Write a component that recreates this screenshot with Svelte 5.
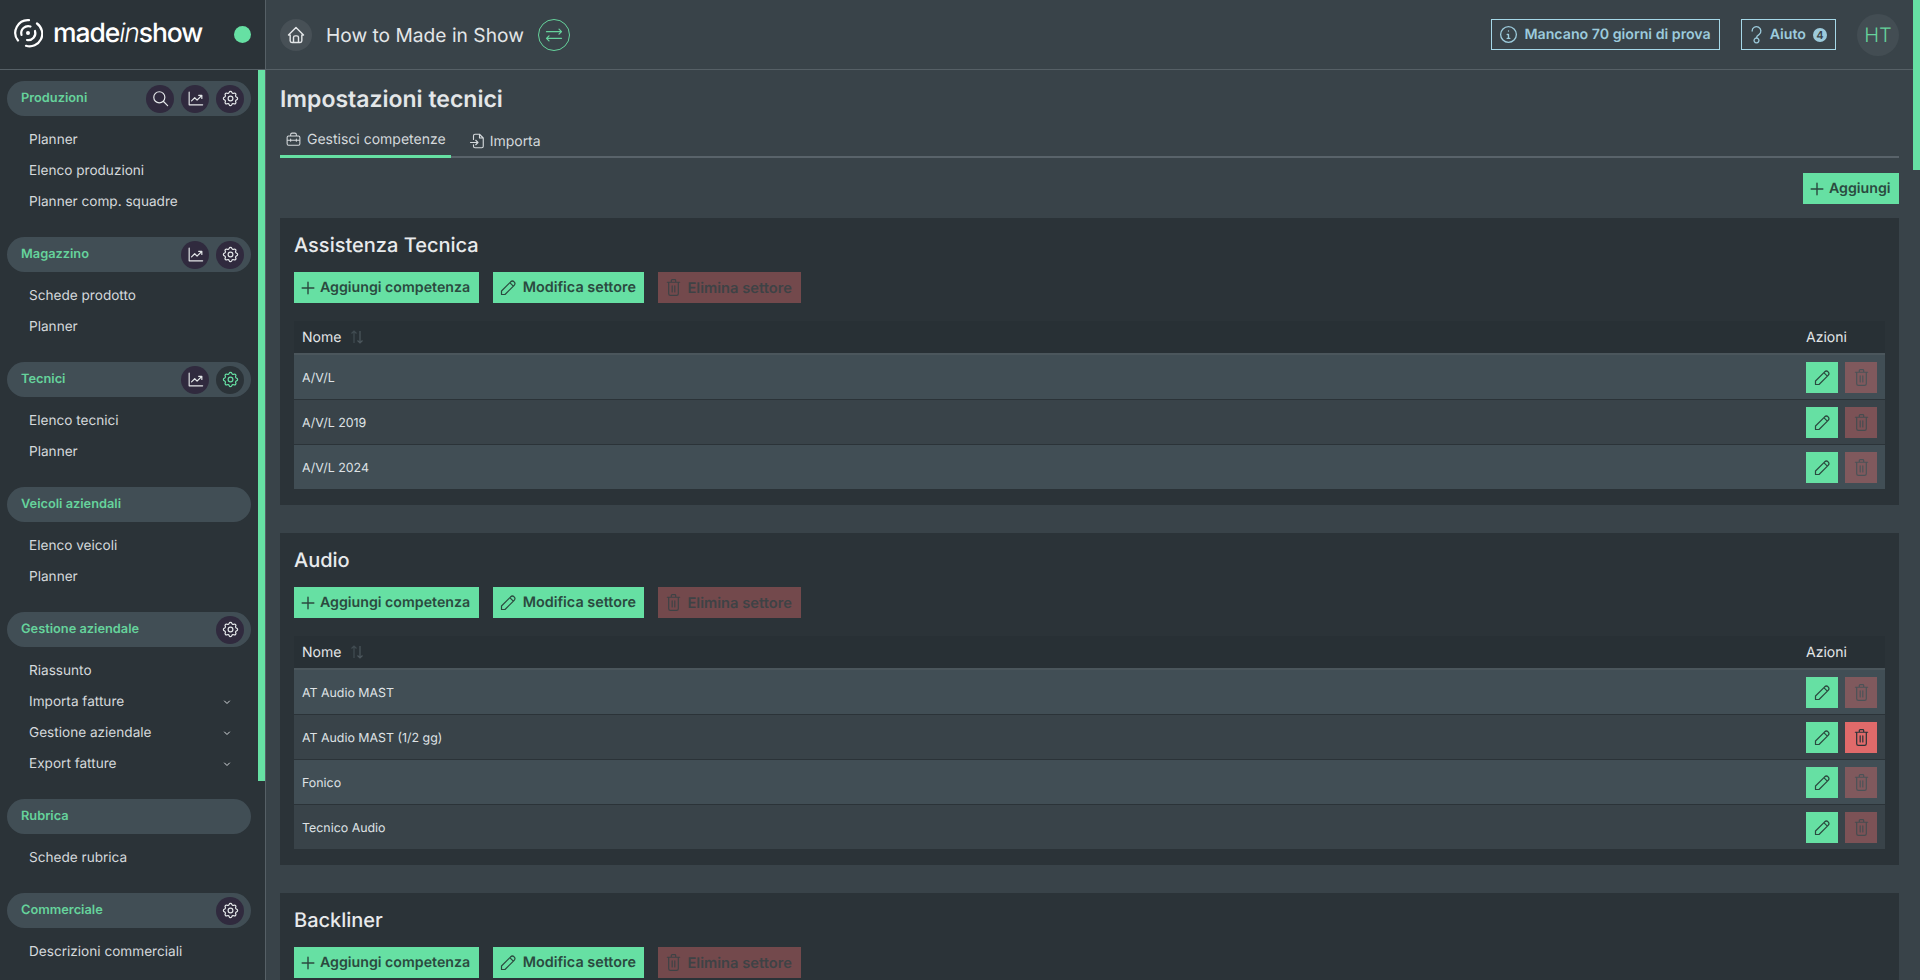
<script>
  const nav = [
    { title: 'Produzioni', icons: ['search', 'chart', 'gear'], items: ['Planner', 'Elenco produzioni', 'Planner comp. squadre'] },
    { title: 'Magazzino', icons: ['chart', 'gear'], items: ['Schede prodotto', 'Planner'] },
    { title: 'Tecnici', icons: ['chart', 'gear-on'], items: ['Elenco tecnici', 'Planner'] },
    { title: 'Veicoli aziendali', icons: [], items: ['Elenco veicoli', 'Planner'] },
    { title: 'Gestione aziendale', icons: ['gear'], items: ['Riassunto', 'Importa fatture>', 'Gestione aziendale>', 'Export fatture>'] },
    { title: 'Rubrica', icons: [], items: ['Schede rubrica'] },
    { title: 'Commerciale', icons: ['gear'], items: ['Descrizioni commerciali'] },
  ];

  const sectors = [
    { name: 'Assistenza Tecnica', rows: ['A/V/L', 'A/V/L 2019', 'A/V/L 2024'] },
    { name: 'Audio', rows: ['AT Audio MAST', 'AT Audio MAST (1/2 gg)', 'Fonico', 'Tecnico Audio'] },
    { name: 'Backliner', rows: [] },
  ];

  const paths = {
    search: 'M10.5 10.5m-7 0a7 7 0 1 0 14 0a7 7 0 1 0 -14 0 M21 21l-5.5 -5.5',
    chart: 'M4 4v16h17 M7 15l4 -4l3 3l5.5 -5.5 M16 8h4v4',
    gear: 'M10.325 4.317c.426 -1.756 2.924 -1.756 3.35 0a1.724 1.724 0 0 0 2.573 1.066c1.543 -.94 3.31 .826 2.37 2.37a1.724 1.724 0 0 0 1.065 2.572c1.756 .426 1.756 2.924 0 3.35a1.724 1.724 0 0 0 -1.066 2.573c.94 1.543 -.826 3.31 -2.37 2.37a1.724 1.724 0 0 0 -2.572 1.065c-.426 1.756 -2.924 1.756 -3.35 0a1.724 1.724 0 0 0 -2.573 -1.066c-1.543 .94 -3.31 -.826 -2.37 -2.37a1.724 1.724 0 0 0 -1.065 -2.572c-1.756 -.426 -1.756 -2.924 0 -3.35a1.724 1.724 0 0 0 1.066 -2.573c-.94 -1.543 .826 -3.31 2.37 -2.37c1 .608 2.296 .07 2.572 -1.065z M9 12a3 3 0 1 0 6 0a3 3 0 1 0 -6 0',
    home: 'M5 12h-2l9 -9l9 9h-2 M5 12v7a2 2 0 0 0 2 2h10a2 2 0 0 0 2 -2v-7 M9 21v-6a2 2 0 0 1 2 -2h2a2 2 0 0 1 2 2v6',
    swap: 'M3 8h18 M18 5l3 3l-3 3 M21 16h-18 M6 13l-3 3l3 3',
    box: 'M3 9a2 2 0 0 1 2 -2h14a2 2 0 0 1 2 2v9a2 2 0 0 1 -2 2h-14a2 2 0 0 1 -2 -2z M8 7v-2a2 2 0 0 1 2 -2h4a2 2 0 0 1 2 2v2 M3 13h18 M8 11.5v3 M16 11.5v3',
    file: 'M14 3v5h5 M6 10v-5a2 2 0 0 1 2 -2h6l5 5v11a2 2 0 0 1 -2 2h-9 a2 2 0 0 1 -2 -2v-2 M2 14h10 M9 11l3 3l-3 3',
    info: 'M3 12a9 9 0 1 0 18 0a9 9 0 1 0 -18 0 M12 8h.01 M10.5 12h1.5v4.5 M10.5 16.5h3',
    help: 'M7 8a5 5 0 1 1 8 4c-1.6 1 -3 1.8 -3 3.6 M12 16a2.8 2.8 0 1 0 .01 0',
    plus: 'M12 5v14 M5 12h14',
    pencil: 'M4 20h4l10.5 -10.5a2.83 2.83 0 0 0 -4 -4l-10.5 10.5v4 M13.5 6.5l4 4',
    trash: 'M5 6h14 M6.5 6v13a2 2 0 0 0 2 2h7a2 2 0 0 0 2 -2v-13 M9.5 6v-2a1 1 0 0 1 1 -1h3a1 1 0 0 1 1 1v2 M10.5 10v7 M13.5 10v7',
    chevron: 'M7 10l5 5l5 -5',
  };
</script>

{#snippet icon(name, size = 18, width = 1.6)}
  <svg class="icon" width={size} height={size} viewBox="0 0 24 24" fill="none" stroke="currentColor" stroke-width={width} stroke-linecap="round" stroke-linejoin="round" aria-hidden="true">
    <path d={paths[name]} />
  </svg>
{/snippet}

<div class="app">
  <aside class="sidebar">
    <div class="brand">
      <svg class="logo-mark" width="30" height="30" viewBox="0 0 30 30" fill="none" stroke="#fff" stroke-width="2.2" stroke-linecap="round" aria-hidden="true">
        <path d="M5 22.5A12.6 12.6 0 0 1 16 2.2" />
        <path d="M24 5.5A12.6 12.6 0 0 1 13 27.8" />
        <path d="M8.5 17A7 7 0 0 1 17.5 8.5" />
        <path d="M22 13A7 7 0 0 1 14 22" />
        <circle cx="15" cy="15" r="2" fill="#fff" stroke="none" />
      </svg>
      <span class="wordmark">made<em>in</em>show</span>
      <span class="status"></span>
    </div>

    <div class="nav-wrap">
      <nav class="nav">
        {#each nav as group}
          <section class="group">
            <div class="pill">
              <span class="pill-title">{group.title}</span>
              {#each group.icons as ic}
                <span class="round" class:on={ic === 'gear-on'}>
                  {@render icon(ic === 'gear-on' ? 'gear' : ic, 19, 1.5)}
                </span>
              {/each}
            </div>
            <ul>
              {#each group.items as item}
                <li>
                  <span>{item.replace('>', '')}</span>
                  {#if item.endsWith('>')}
                    {@render icon('chevron', 12, 2)}
                  {/if}
                </li>
              {/each}
            </ul>
          </section>
        {/each}
      </nav>
      <div class="scroll-thumb side"></div>
    </div>
  </aside>

  <div class="right">
    <header class="topbar">
      <span class="circle home">{@render icon('home', 20, 1.7)}</span>
      <span class="org">How to Made in Show</span>
      <span class="circle swap">{@render icon('swap', 20, 1.5)}</span>
      <span class="spacer"></span>
      <span class="notice trial">{@render icon('info', 21, 1.5)}Mancano 70 giorni di prova</span>
      <span class="notice help">
        {@render icon('help', 21, 1.5)}Aiuto
        <span class="badge">4</span>
      </span>
      <span class="avatar">HT</span>
    </header>

    <main class="content">
      <h1>Impostazioni tecnici</h1>
      <div class="tabs">
        <span class="tab active">{@render icon('box', 17, 1.5)}Gestisci competenze</span>
        <span class="tab second">{@render icon('file', 18, 1.5)}Importa</span>
      </div>
      <div class="add-row">
        <button class="btn with-plus">{@render icon('plus', 20, 1.7)}Aggiungi</button>
      </div>

      {#each sectors as sector}
        <section class="card">
          <h2>{sector.name}</h2>
          <div class="actions">
            <button class="btn with-plus">{@render icon('plus', 20, 1.7)}Aggiungi competenza</button>
            <button class="btn with-pencil">{@render icon('pencil', 21, 1.4)}Modifica settore</button>
            <button class="btn danger with-trash" disabled>{@render icon('trash', 21, 1.4)}Elimina settore</button>
          </div>
          {#if sector.rows.length}
            <table>
              <thead>
                <tr>
                  <th>
                    Nome
                    <svg class="sort" width="16" height="16" viewBox="0 0 16 16" fill="none" stroke-width="1.2" aria-hidden="true">
                      <path d="M5 14V2M2.5 4.5 5 2l2.5 2.5" stroke="#414c52" />
                      <path d="M11 2v12M8.5 11.5 11 14l2.5-2.5" stroke="#4c575d" />
                    </svg>
                  </th>
                  <th class="col-actions">Azioni</th>
                </tr>
              </thead>
              <tbody>
                {#each sector.rows as row}
                  <tr>
                    <td>{row}</td>
                    <td class="col-actions">
                      <div class="row-actions">
                        <button class="btn square">{@render icon('pencil', 21, 1.4)}</button>
                        <button class="btn square danger" class:live={row === 'AT Audio MAST (1/2 gg)'}>{@render icon('trash', 21, 1.4)}</button>
                      </div>
                    </td>
                  </tr>
                {/each}
              </tbody>
            </table>
          {/if}
        </section>
      {/each}
    </main>
    <div class="scroll-thumb page"></div>
  </div>
</div>

<style>
  :global(body) {
    margin: 0;
    background: #394349;
    font-family: Inter, "Noto Sans", sans-serif;
    color: #e3e6e8;
    overflow: hidden;
    text-rendering: geometricPrecision;
  }

  .app {
    display: flex;
    height: 980px;
    overflow: hidden;
  }

  .icon {
    flex: none;
    display: block;
  }

  /* ── Sidebar ──────────────────────────────────────────── */
  .sidebar {
    width: 266px;
    box-sizing: border-box;
    flex: none;
    background: #2b3338;
    border-right: 1px solid #566066;
    display: flex;
    flex-direction: column;
  }

  .brand {
    height: 70px;
    flex: none;
    box-sizing: border-box;
    border-bottom: 1px solid #566066;
    display: flex;
    align-items: center;
    padding: 0 14px 0 13px;
  }

  .logo-mark {
    flex: none;
    margin-right: 10px;
    margin-top: -3px;
  }

  .wordmark {
    font-size: 26.5px;
    font-weight: 500;
    letter-spacing: -1.1px;
    color: #fff;
    margin-top: -3px;
  }

  .wordmark em {
    font-weight: 300;
  }

  .status {
    width: 17px;
    height: 17px;
    border-radius: 50%;
    background: #66e0a3;
    margin-left: auto;
    margin-top: -1px;
  }

  .nav-wrap {
    position: relative;
    flex: 1;
    overflow: hidden;
  }

  .nav {
    padding: 11px 14px 0 7px;
    display: flex;
    flex-direction: column;
    gap: 20px;
  }

  .pill {
    height: 35px;
    box-sizing: border-box;
    border-radius: 18px;
    background: #414e55;
    display: flex;
    align-items: center;
    gap: 7px;
    padding: 0 7px 0 14px;
  }

  .pill-title {
    font-size: 12.8px;
    font-weight: 600;
    color: #66d39c;
    margin-right: auto;
  }

  .round {
    width: 28px;
    height: 28px;
    border-radius: 50%;
    background: #302a3e;
    color: #e3e6e8;
    display: flex;
    align-items: center;
    justify-content: center;
    padding-bottom: 1px;
    box-sizing: border-box;
  }

  .round.on {
    color: #66e0a3;
    background: #2b3338;
  }

  .group ul {
    list-style: none;
    margin: 8px 0 0;
    padding: 0 18px 0 22px;
  }

  .group li {
    height: 31px;
    display: flex;
    align-items: center;
    justify-content: space-between;
    font-size: 13.6px;
    color: #d5d9dc;
  }

  .scroll-thumb {
    position: absolute;
    right: 0;
    width: 7px;
    background: #66e0a3;
  }

  .scroll-thumb.side {
    top: 0;
    height: 711px;
  }

  .scroll-thumb.page {
    top: 0;
    height: 170px;
  }

  /* ── Top bar ──────────────────────────────────────────── */
  .right {
    position: relative;
    flex: 1;
    min-width: 0;
    display: flex;
    flex-direction: column;
  }

  .topbar {
    height: 70px;
    flex: none;
    box-sizing: border-box;
    border-bottom: 1px solid #566066;
    display: flex;
    align-items: center;
    padding: 0 21px 0 14px;
  }

  .circle {
    width: 32px;
    height: 32px;
    box-sizing: border-box;
    border-radius: 50%;
    display: flex;
    align-items: center;
    justify-content: center;
  }

  .home {
    background: #475056;
    color: #e3e6e8;
  }

  .swap {
    border: 1px solid #66d39c;
    color: #66d39c;
  }

  .org {
    font-size: 19.2px;
    color: #e3e6e8;
    margin: 0 14px;
  }

  .spacer {
    flex: 1;
  }

  .notice {
    height: 31px;
    box-sizing: border-box;
    border: 1px solid #a5d8e8;
    color: #9ccbdc;
    font-size: 14.2px;
    font-weight: 600;
    display: flex;
    align-items: center;
  }

  .trial {
    padding: 0 8px 0 6px;
    gap: 5px;
    margin-right: 21px;
  }

  .help {
    padding: 0 8px 0 4px;
    gap: 3px;
  }

  .badge {
    width: 14px;
    height: 14px;
    border-radius: 50%;
    background: #9ccbdc;
    color: #394349;
    font-size: 11px;
    line-height: 14px;
    text-align: center;
    margin-left: 4px;
  }

  .avatar {
    width: 42px;
    height: 42px;
    border-radius: 50%;
    background: #434d53;
    color: #66d39c;
    font-size: 20px;
    font-weight: 300;
    display: flex;
    align-items: center;
    justify-content: center;
    margin-left: 21px;
  }

  /* ── Content ──────────────────────────────────────────── */
  .content {
    padding: 0 21px 0 14px;
    overflow: hidden;
  }

  h1 {
    margin: 15px 0 0;
    font-size: 23px;
    line-height: 28px;
    font-weight: 600;
    color: #e3e6e8;
  }

  .tabs {
    margin-top: 9px;
    height: 36px;
    box-sizing: border-box;
    display: flex;
    gap: 13px;
    border-bottom: 2px solid #59636a;
  }

  .tab {
    height: 36px;
    box-sizing: border-box;
    padding: 2px 5px 0 5px;
    display: flex;
    align-items: center;
    gap: 5px;
    font-size: 14px;
    color: #d5d9dc;
  }

  .tab.active {
    border-bottom: 3px solid #66e0a3;
  }

  .tab.second {
    gap: 3px;
  }

  .add-row {
    display: flex;
    justify-content: flex-end;
    margin-top: 15px;
  }

  .btn {
    height: 31px;
    border: 0;
    padding: 0 8.5px 0 5px;
    background: #66e0a3;
    color: #2b4a3f;
    font-family: inherit;
    font-size: 14.2px;
    font-weight: 600;
    display: flex;
    align-items: center;
    text-rendering: geometricPrecision;
  }

  .with-plus {
    padding-left: 4px;
    gap: 2px;
  }

  .with-pencil {
    gap: 4px;
    font-size: 14.4px;
  }

  .with-trash {
    gap: 3px;
    font-size: 14.7px;
    padding-right: 9px;
  }

  .btn.danger {
    background: #e06a6a;
    opacity: 0.4;
    color: #5c5a5a;
  }

  .btn.danger.live {
    opacity: 1;
    color: #2b3338;
  }

  .btn.square {
    width: 32px;
    padding: 0;
    justify-content: center;
  }

  .card {
    background: #2b3338;
    margin-top: 14px;
    margin-bottom: 28px;
    padding: 14px 14px 15px;
  }

  h2 {
    margin: 0;
    font-size: 20px;
    line-height: 26px;
    font-weight: 500;
    color: #e8eaec;
  }

  .actions {
    display: flex;
    gap: 14px;
    margin-top: 14px;
    margin-bottom: 18px;
  }

  table {
    width: 100%;
    border-collapse: collapse;
  }

  th {
    height: 31px;
    background: #283035;
    border-bottom: 2px solid #4b565c;
    padding: 1px 8px 0;
    text-align: left;
    font-size: 14px;
    font-weight: 400;
    color: #e3e6e8;
  }

  .sort {
    vertical-align: -3px;
    margin-left: 4px;
  }

  td {
    height: 44px;
    padding: 0 8px;
    font-size: 12.4px;
    color: #dfe2e5;
    background: #394349;
    border-bottom: 1px solid #2b3338;
  }

  tbody tr:nth-child(odd) td {
    background: #414e55;
  }

  .col-actions {
    width: 87px;
    box-sizing: border-box;
  }

  .row-actions {
    display: flex;
    gap: 7px;
  }
</style>
